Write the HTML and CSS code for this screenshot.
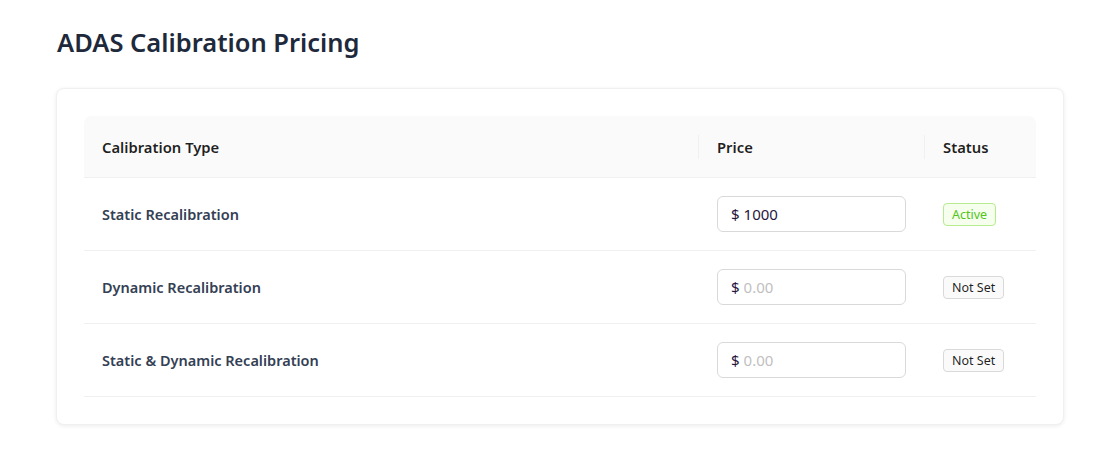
FILE: index.html
```html
<!DOCTYPE html>
<html lang="en">
<head>
  <meta charset="UTF-8" />
  <meta name="viewport" content="width=device-width, initial-scale=1.0"/>
  <title>ADAS Calibration Pricing</title>
  <link rel="stylesheet" href="styles.css">
</head>
<body>

  <h1>ADAS Calibration Pricing</h1>

  <div class="card">
    <table class="pricing">
      <thead>
        <tr>
          <th class="col-type">Calibration Type</th>
          <th class="col-price">Price</th>
          <th class="col-status">Status</th>
        </tr>
      </thead>
      <tbody>
        <tr>
          <td class="name">Static Recalibration</td>
          <td>
            <label class="price-input">
              <span class="prefix">$</span>
              <input type="text" value="1000" placeholder="0.00">
            </label>
          </td>
          <td><span class="tag active">Active</span></td>
        </tr>
        <tr>
          <td class="name">Dynamic Recalibration</td>
          <td>
            <label class="price-input">
              <span class="prefix">$</span>
              <input type="text" placeholder="0.00">
            </label>
          </td>
          <td><span class="tag">Not Set</span></td>
        </tr>
        <tr>
          <td class="name">Static &amp; Dynamic Recalibration</td>
          <td>
            <label class="price-input">
              <span class="prefix">$</span>
              <input type="text" placeholder="0.00">
            </label>
          </td>
          <td><span class="tag">Not Set</span></td>
        </tr>
      </tbody>
    </table>
  </div>

</body>
</html>
```

FILE: styles.css
```css
body {
  font-family: 'Noto Sans', 'Open Sans', sans-serif;
  background: #ffffff;
  margin: 0;
  padding: 24px 56px;
  color: rgba(0, 0, 0, 0.88);
}

h1 {
  font-size: 25.5px;
  font-weight: 600;
  color: #1e293b;
  margin: 0 0 28px 1px;
  line-height: 36px;
}

.card {
  width: 952px;
  background: #ffffff;
  border: 1px solid #f0f0f0;
  border-radius: 8px;
  box-shadow: 0 1px 4px rgba(0, 0, 0, 0.08);
  padding: 27px;
}

.pricing {
  width: 100%;
  border-collapse: separate;
  border-spacing: 0;
  font-size: 14.5px;
}

.pricing th {
  position: relative;
  background: #fafafa;
  text-align: left;
  font-size: 14.8px;
  font-weight: 600;
  color: rgba(0, 0, 0, 0.88);
  height: 61px;
  padding: 0 18px 0 19px;
  border-bottom: 1px solid #f0f0f0;
}

.pricing th:first-child,
.pricing td:first-child {
  padding-left: 18px;
}

.pricing th:first-child {
  border-top-left-radius: 8px;
}

.pricing th:last-child {
  border-top-right-radius: 8px;
}

.pricing th + th::before {
  content: "";
  position: absolute;
  left: 0;
  top: 50%;
  height: 24px;
  margin-top: -12px;
  width: 1px;
  background: #f0f0f0;
}

.col-type {
  width: 578px;
}

.col-price {
  width: 187px;
}

.pricing td {
  height: 72px;
  padding: 0 18px 0 19px;
  border-bottom: 1px solid #f0f0f0;
}

.name {
  font-weight: 600;
  color: #344054;
}

.price-input {
  display: flex;
  align-items: center;
  gap: 4px;
  width: 189px;
  height: 36px;
  box-sizing: border-box;
  padding: 0 13px;
  border: 1px solid #d9d9d9;
  border-radius: 6px;
  background: #ffffff;
}

.prefix {
  color: #1f1640;
  font-size: 15px;
}

.price-input input {
  border: none;
  outline: none;
  flex: 1;
  min-width: 0;
  padding: 0;
  font-family: inherit;
  font-size: 15px;
  color: #1f1640;
  background: transparent;
}

.price-input input::placeholder {
  color: #bfbfbf;
}

.tag {
  display: inline-block;
  padding: 0 8px;
  font-size: 12.5px;
  line-height: 21px;
  border: 1px solid #d9d9d9;
  border-radius: 4px;
  background: #fafafa;
  color: rgba(0, 0, 0, 0.88);
}

.tag.active {
  background: #f6ffed;
  border-color: #b7eb8f;
  color: #52c41a;
}
```
